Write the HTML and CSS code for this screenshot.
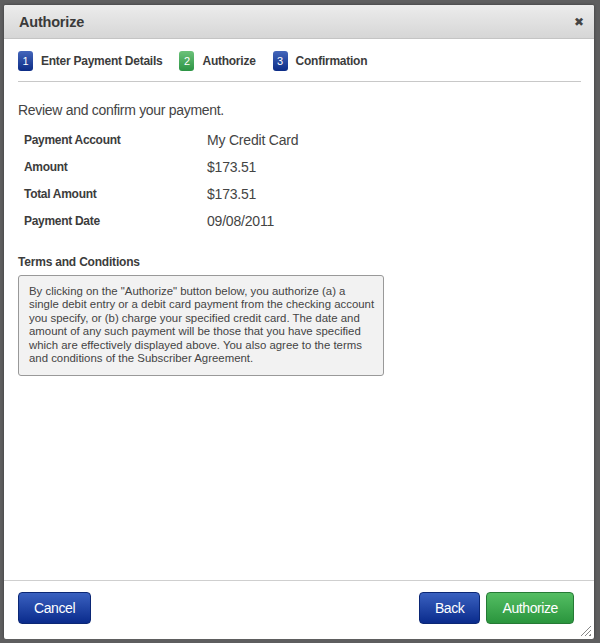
FILE: index.html
```html
<!DOCTYPE html>
<html lang="en">
<head>
    <meta charset="UTF-8">
    <title>Authorize</title>
    <link rel="stylesheet" href="styles.css">
</head>
<body>
    <div class="dialog">
        <div class="dialog-header">
            <h1>Authorize</h1>
            <span class="close">&#x2716;</span>
        </div>

        <div class="dialog-body">
            <ul class="steps">
                <li><span class="badge blue">1</span>Enter Payment Details</li>
                <li><span class="badge green">2</span>Authorize</li>
                <li><span class="badge blue">3</span>Confirmation</li>
            </ul>

            <p class="intro">Review and confirm your payment.</p>

            <table class="summary">
                <tr><th>Payment Account</th><td>My Credit Card</td></tr>
                <tr><th>Amount</th><td>$173.51</td></tr>
                <tr><th>Total Amount</th><td>$173.51</td></tr>
                <tr><th>Payment Date</th><td>09/08/2011</td></tr>
            </table>

            <h2>Terms and Conditions</h2>
            <div class="terms">
                By clicking on the "Authorize" button below, you authorize (a) a single debit entry or a debit card payment from the checking account you specify, or (b) charge your specified credit card. The date and amount of any such payment will be those that you have specified which are effectively displayed above. You also agree to the terms and conditions of the Subscriber Agreement.
            </div>
        </div>

        <div class="dialog-footer">
            <button class="btn blue">Cancel</button>
            <div class="right">
                <button class="btn blue">Back</button>
                <button class="btn green">Authorize</button>
            </div>
            <span class="grip"></span>
        </div>
    </div>
</body>
</html>
```

FILE: styles.css
```css
body {
    margin: 0;
    background: #5e5e5f;
    font-family: "Liberation Sans", Arial, sans-serif;
    color: #333;
}

.dialog {
    margin: 5px 6px 0 4px;
    width: 590px;
    height: 634px;
    background: #fff;
    border-radius: 2px;
    display: flex;
    flex-direction: column;
    box-shadow: 0 0 3px rgba(0,0,0,0.4);
}

.dialog-header {
    height: 33px;
    display: flex;
    align-items: center;
    justify-content: space-between;
    padding: 0 10px 0 15px;
    background: linear-gradient(#ececec, #d6d6d6);
    border-bottom: 1px solid #c4c4c4;
    border-radius: 2px 2px 0 0;
}

.dialog-header h1 {
    margin: 0;
    font-size: 14.5px;
    letter-spacing: -0.2px;
    font-weight: bold;
    color: #3a3a3a;
}

.close {
    font-size: 12px;
    color: #444;
}

.dialog-body {
    flex: 1;
    padding: 0 13px 0 14px;
}

.steps {
    list-style: none;
    margin: 11px 0 0;
    padding: 0 0 9px;
    display: flex;
    gap: 17px;
    border-bottom: 1px solid #c8c8c8;
}

.steps li {
    display: flex;
    align-items: center;
    font-size: 12px;
    letter-spacing: -0.25px;
    font-weight: bold;
    color: #3c3c3c;
    line-height: 22px;
}

.badge {
    width: 15px;
    height: 20px;
    margin-right: 8px;
    border-radius: 3px;
    color: #fff;
    font-size: 11px;
    font-weight: normal;
    letter-spacing: 0;
    text-align: center;
    line-height: 21px;
}

.badge.blue {
    background: linear-gradient(#4466bb, #0c2c86);
}

.badge.green {
    background: linear-gradient(#6cc27a, #2c9444);
}

.intro {
    margin: 20px 0 8px;
    font-size: 14px;
    letter-spacing: -0.3px;
    color: #444;
}

.summary {
    border-collapse: collapse;
    margin-left: 4px;
}

.summary th {
    width: 183px;
    padding: 0 0 0 2px;
    height: 27px;
    text-align: left;
    font-size: 12px;
    letter-spacing: -0.3px;
    color: #3c3c3c;
}

.summary td {
    padding: 0;
    font-size: 14px;
    letter-spacing: -0.2px;
    color: #444;
}

.dialog-body h2 {
    margin: 21px 0 6px;
    font-size: 12px;
    letter-spacing: -0.2px;
    color: #3c3c3c;
}

.terms {
    width: 346px;
    padding: 9px 8px 10px 10px;
    background: #f2f2f2;
    border: 1px solid #999;
    border-radius: 3px;
    font-size: 11.4px;
    line-height: 13.4px;
    color: #444;
}

.dialog-footer {
    position: relative;
    height: 59px;
    display: flex;
    align-items: flex-start;
    justify-content: space-between;
    padding: 11px 20px 0 14px;
    box-sizing: border-box;
    border-top: 1px solid #cfcfcf;
}

.right {
    display: flex;
    gap: 6px;
}

.btn {
    height: 32px;
    padding: 0 15px;
    border-radius: 4px;
    font-family: "Liberation Sans", Arial, sans-serif;
    font-size: 14px;
    letter-spacing: -0.4px;
    color: #fff;
    cursor: pointer;
}

.btn.blue {
    background: linear-gradient(#3a61c0, #0a2b8c);
    border: 1px solid #0b2775;
}

.btn.green {
    background: linear-gradient(#54be63, #2a953d);
    border: 1px solid #257a35;
}

.grip {
    position: absolute;
    right: 3px;
    bottom: 3px;
    width: 10px;
    height: 10px;
    background: linear-gradient(135deg, transparent 45%, #888 45%, #888 52%, transparent 52%, transparent 65%, #888 65%, #888 72%, transparent 72%, transparent 85%, #888 85%);
}
```
